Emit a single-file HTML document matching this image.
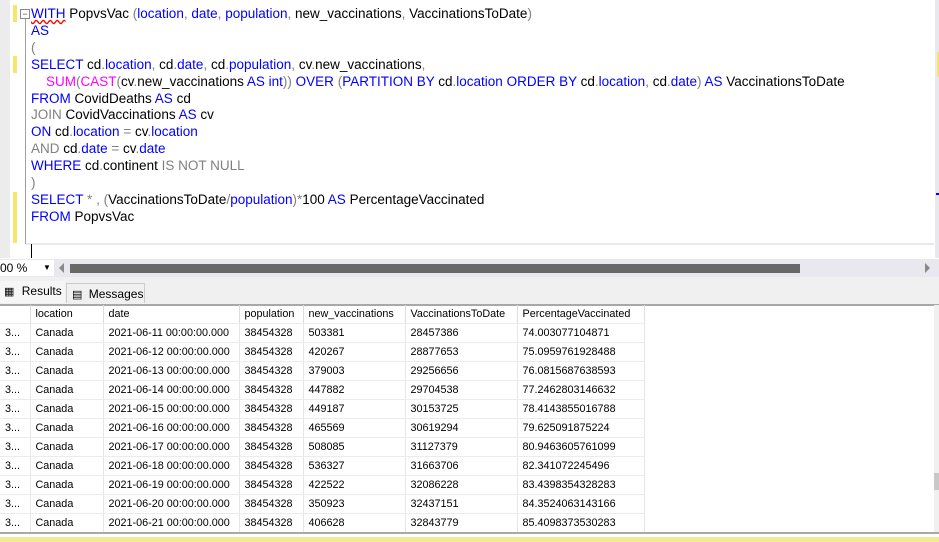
<!DOCTYPE html>
<html><head><style>
body{margin:0;width:939px;height:542px;overflow:hidden;background:#fff;font-family:"Liberation Sans",sans-serif;position:relative}
.a{position:absolute}
.code{left:31px;top:6px;font-size:13.5px;line-height:16.9px;color:#000;white-space:pre}
.k{color:#0000ff}.g{color:#808080}.m{color:#ff00ff}
.y{background:#f5e66b;left:13px;width:4px}
table{border-collapse:collapse;table-layout:fixed;font-size:10.8px;position:absolute;left:0;top:305px;width:644px}
td{height:18px;padding:0 0 0 5px;border-right:1px solid #e6e6e6;border-bottom:1px solid #ececec;white-space:nowrap;overflow:hidden}
tr.h td{border-right:1px solid #ddd;height:18px}
</style></head><body>
<div class="a" style="left:0;top:0;width:10px;height:258px;background:#ececec"></div>
<div class="a y" style="top:5px;height:17px"></div>
<div class="a y" style="top:56px;height:17px"></div>
<div class="a y" style="top:192px;height:51px"></div>
<div class="a" style="left:25px;top:14px;width:1px;height:230px;background:#a0a0a0"></div>
<div class="a" style="left:20px;top:9px;width:8px;height:8px;border:1px solid #888;background:#fff;font-size:9px;line-height:8px;text-align:center;color:#444">−</div>
<div class="a code"><span class="k" style="text-decoration:underline wavy red">WITH</span> PopvsVac <span class="g">(</span><span class="k">location</span><span class="g">,</span> <span class="k">date</span><span class="g">,</span> <span class="k">population</span><span class="g">,</span> new_vaccinations<span class="g">,</span> VaccinationsToDate<span class="g">)</span>
<span class="k">AS</span>
<span class="g">(</span>
<span class="k">SELECT</span> cd<span class="g">.</span><span class="k">location</span><span class="g">,</span> cd<span class="g">.</span><span class="k">date</span><span class="g">,</span> cd<span class="g">.</span><span class="k">population</span><span class="g">,</span> cv<span class="g">.</span>new_vaccinations<span class="g">,</span>
    <span class="m">SUM</span><span class="g">(</span><span class="m">CAST</span><span class="g">(</span>cv<span class="g">.</span>new_vaccinations <span class="k">AS int</span><span class="g">))</span> <span class="k">OVER</span> <span class="g">(</span><span class="k">PARTITION BY</span> cd<span class="g">.</span><span class="k">location</span> <span class="k">ORDER BY</span> cd<span class="g">.</span><span class="k">location</span><span class="g">,</span> cd<span class="g">.</span><span class="k">date</span><span class="g">)</span> <span class="k">AS</span> VaccinationsToDate
<span class="k">FROM</span> CovidDeaths <span class="k">AS</span> cd
<span class="g">JOIN</span> CovidVaccinations <span class="k">AS</span> cv
<span class="k">ON</span> cd<span class="g">.</span><span class="k">location</span> <span class="g">=</span> cv<span class="g">.</span><span class="k">location</span>
<span class="g">AND</span> cd<span class="g">.</span><span class="k">date</span> <span class="g">=</span> cv<span class="g">.</span><span class="k">date</span>
<span class="k">WHERE</span> cd<span class="g">.</span>continent <span class="g">IS NOT NULL</span>
<span class="g">)</span>
<span class="k">SELECT</span> <span class="g">*</span> <span class="g">,</span> <span class="g">(</span>VaccinationsToDate<span class="g">/</span><span class="k">population</span><span class="g">)*</span>100 <span class="k">AS</span> PercentageVaccinated
<span class="k">FROM</span> PopvsVac</div>
<div class="a" style="left:26px;top:243px;width:908px;height:14px;border-top:2px solid #e8e8ee;border-bottom:2px solid #e8e8ee"></div>
<div class="a" style="left:31px;top:244px;width:1px;height:14px;background:#000"></div>
<div class="a" style="left:935px;top:0;width:4px;height:258px;background:#e8e8ee"></div>
<div class="a" style="left:937px;top:52px;width:2px;height:25px;background:#f5e66b"></div>
<div class="a" style="left:936px;top:193px;width:3px;height:2px;background:#00f"></div>
<div class="a" style="left:0;top:259px;width:939px;height:18px;background:#e8e8ee"></div>
<div class="a" style="left:0;top:260px;width:54px;height:16px;background:#fff;font-size:12px;line-height:16px">00 %<span style="position:absolute;left:43px;font-size:8px">▼</span></div>
<div class="a" style="left:59px;top:263px;width:0;height:0;border:5px solid transparent;border-right-color:#888;border-left:0"></div>
<div class="a" style="left:70px;top:264px;width:730px;height:9px;background:#686868"></div>
<div class="a" style="left:925px;top:263px;width:0;height:0;border:5px solid transparent;border-left-color:#888;border-right:0"></div>
<div class="a" style="left:0;top:277px;width:939px;height:27px;background:#f0f0f0;border-bottom:2px solid #a8a8a8"></div>
<div class="a" style="left:0;top:281px;width:65px;height:22px;background:#f6f6f6;font-size:12px;line-height:20px"><span style="margin-left:4px;font-size:11px">▦</span> <span style="margin-left:4px">Results</span></div>
<div class="a" style="left:66px;top:283px;width:77px;height:19px;border:1px solid #ccc;border-bottom:0;font-size:12px;line-height:20px;background:#f0f0f0"><span style="margin-left:5px;font-size:11px">▤</span> <span style="margin-left:3px">Messages</span></div>
<table>
<colgroup><col style="width:30px"><col style="width:73px"><col style="width:136px"><col style="width:64px"><col style="width:102px"><col style="width:112px"><col style="width:127px"></colgroup>
<tr class="h"><td></td><td>location</td><td>date</td><td>population</td><td>new_vaccinations</td><td>VaccinationsToDate</td><td>PercentageVaccinated</td></tr>
<tr><td>3...</td><td>Canada</td><td>2021-06-11 00:00:00.000</td><td>38454328</td><td>503381</td><td>28457386</td><td>74.003077104871</td></tr>
<tr><td>3...</td><td>Canada</td><td>2021-06-12 00:00:00.000</td><td>38454328</td><td>420267</td><td>28877653</td><td>75.0959761928488</td></tr>
<tr><td>3...</td><td>Canada</td><td>2021-06-13 00:00:00.000</td><td>38454328</td><td>379003</td><td>29256656</td><td>76.0815687638593</td></tr>
<tr><td>3...</td><td>Canada</td><td>2021-06-14 00:00:00.000</td><td>38454328</td><td>447882</td><td>29704538</td><td>77.2462803146632</td></tr>
<tr><td>3...</td><td>Canada</td><td>2021-06-15 00:00:00.000</td><td>38454328</td><td>449187</td><td>30153725</td><td>78.4143855016788</td></tr>
<tr><td>3...</td><td>Canada</td><td>2021-06-16 00:00:00.000</td><td>38454328</td><td>465569</td><td>30619294</td><td>79.625091875224</td></tr>
<tr><td>3...</td><td>Canada</td><td>2021-06-17 00:00:00.000</td><td>38454328</td><td>508085</td><td>31127379</td><td>80.9463605761099</td></tr>
<tr><td>3...</td><td>Canada</td><td>2021-06-18 00:00:00.000</td><td>38454328</td><td>536327</td><td>31663706</td><td>82.341072245496</td></tr>
<tr><td>3...</td><td>Canada</td><td>2021-06-19 00:00:00.000</td><td>38454328</td><td>422522</td><td>32086228</td><td>83.4398354328283</td></tr>
<tr><td>3...</td><td>Canada</td><td>2021-06-20 00:00:00.000</td><td>38454328</td><td>350923</td><td>32437151</td><td>84.3524063143166</td></tr>
<tr><td>3...</td><td>Canada</td><td>2021-06-21 00:00:00.000</td><td>38454328</td><td>406628</td><td>32843779</td><td>85.4098373530283</td></tr>
</table>
<div class="a" style="left:934px;top:305px;width:5px;height:227px;background:#f0f0f0"></div>
<div class="a" style="left:934px;top:473px;width:5px;height:17px;background:#c8c8c8"></div>
<div class="a" style="left:0;top:532px;width:939px;height:2px;background:#a8a8a8"></div>
<div class="a" style="left:0;top:534px;width:939px;height:3px;background:#fff"></div>
<div class="a" style="left:0;top:537px;width:939px;height:5px;background:#f3e89a"></div>
</body></html>
